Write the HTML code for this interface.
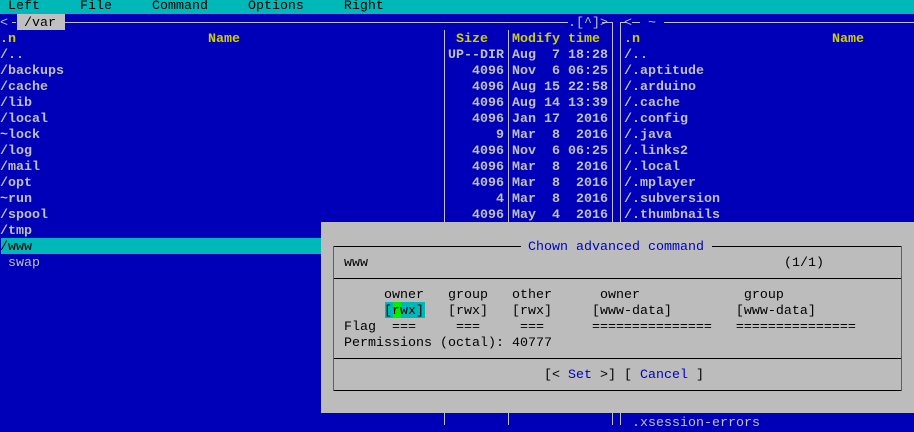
<!DOCTYPE html>
<html><head><meta charset="utf-8"><style>
body{margin:0;width:914px;height:425px;overflow:hidden;background:#0000b8;position:relative;font-family:"Liberation Mono",monospace;font-size:13.33px;}
.t{position:absolute;white-space:pre;line-height:16px;height:16px;color:#c0c0c0;font-weight:bold;transform:translateY(2px);}
.n{font-weight:normal}
.y{color:#d0d000}
.k{color:#000;font-weight:normal}
.b{color:#0000c8;font-weight:normal}
.l{position:absolute;background:#c0c0c0}
.d{position:absolute;background:#000}
.v{position:absolute;background:#8b5a10}
</style></head><body>
<div style="position:absolute;left:0;top:0;width:914px;height:14px;background:#00b8b8"></div>
<div class="t k" style="left:8px;top:-3px">Left     File     Command     Options     Right</div>

<div class="l" style="left:12px;top:22px;width:4px;height:1px"></div>
<div class="t n" style="left:0;top:14px">&lt;</div>
<div style="position:absolute;left:17px;top:14px;width:48px;height:16px;background:#c0c0c0"></div>
<div class="t k" style="left:16px;top:14px"> /var</div>
<div class="l" style="left:65px;top:22px;width:503px;height:1px"></div>
<div class="t n" style="left:568px;top:14px">.[^]&gt;</div>
<div class="l" style="left:612px;top:22px;width:1px;height:403px"></div>
<div class="l" style="left:602px;top:22px;width:10px;height:1px"></div>
<div class="l" style="left:620px;top:22px;width:1px;height:403px"></div>
<div class="l" style="left:620px;top:22px;width:6px;height:1px"></div>
<div class="t n" style="left:624px;top:14px">&lt;</div>
<div class="l" style="left:632px;top:22px;width:8px;height:1px"></div>
<div class="t n" style="left:640px;top:14px"> ~ </div>
<div class="l" style="left:664px;top:22px;width:250px;height:1px"></div>
<div class="l" style="left:444px;top:30px;width:1px;height:395px"></div>
<div class="l" style="left:508px;top:30px;width:1px;height:395px"></div>

<div class="t y" style="left:0;top:30px">.n</div>
<div class="t y" style="left:208px;top:30px">Name</div>
<div class="t y" style="left:456px;top:30px">Size</div>
<div class="t y" style="left:512px;top:30px">Modify time</div>
<div class="t y" style="left:624px;top:30px">.n</div>
<div class="t y" style="left:832px;top:30px">Name</div>

<div class="t" style="left:0;top:46px">/..
/backups
/cache
/lib
/local
~lock
/log
/mail
/opt
~run
/spool
/tmp</div>
<div style="position:absolute;left:1px;top:238px;width:320px;height:16px;background:#00b8b8"></div>
<div class="t k" style="left:0;top:238px">/www</div>
<div class="t n" style="left:0;top:254px"> swap</div>
<div class="t" style="left:448px;top:46px">UP--DIR Aug  7 18:28
   4096 Nov  6 06:25
   4096 Aug 15 22:58
   4096 Aug 14 13:39
   4096 Jan 17  2016
      9 Mar  8  2016
   4096 Nov  6 06:25
   4096 Mar  8  2016
   4096 Mar  8  2016
      4 Mar  8  2016
   4096 May  4  2016</div>
<div class="t" style="left:624px;top:46px">/..
/.aptitude
/.arduino
/.cache
/.config
/.java
/.links2
/.local
/.mplayer
/.subversion
/.thumbnails</div>
<div class="t n" style="left:624px;top:414px"> .xsession-errors</div>

<div style="position:absolute;left:321px;top:222px;width:593px;height:191px;background:#bcbcbc"></div>
<div class="d" style="left:333px;top:246px;width:188px;height:1px"></div>
<div class="t b" style="left:520px;top:238px"> Chown advanced command </div>
<div class="d" style="left:712px;top:246px;width:190px;height:1px"></div>
<div class="d" style="left:333px;top:278px;width:569px;height:1px"></div>
<div class="d" style="left:333px;top:358px;width:569px;height:1px"></div>
<div class="d" style="left:333px;top:390px;width:569px;height:1px"></div>
<div class="v" style="left:333px;top:246px;width:1px;height:145px"></div>
<div class="v" style="left:901px;top:246px;width:1px;height:145px"></div>
<div class="t k" style="left:344px;top:254px">www</div>
<div class="t k" style="left:784px;top:254px">(1/1)</div>
<div class="t k" style="left:384px;top:286px">owner   group   other      owner             group</div>
<div style="position:absolute;left:385px;top:302px;width:40px;height:16px;background:#00b8b8"></div>
<div style="position:absolute;left:393px;top:302px;width:8px;height:16px;background:#00ee00"></div>
<div class="t k" style="left:384px;top:302px">[rwx]   [rwx]   [rwx]     [www-data]        [www-data]</div>
<div class="t k" style="left:344px;top:318px">Flag  ===     ===     ===      ===============   ===============</div>
<div class="t k" style="left:344px;top:334px">Permissions (octal): 40777</div>
<div class="t k" style="left:544px;top:366px">[&lt; <span class="b">Set</span> &gt;] [ <span class="b">Cancel</span> ]</div>
</body></html>
